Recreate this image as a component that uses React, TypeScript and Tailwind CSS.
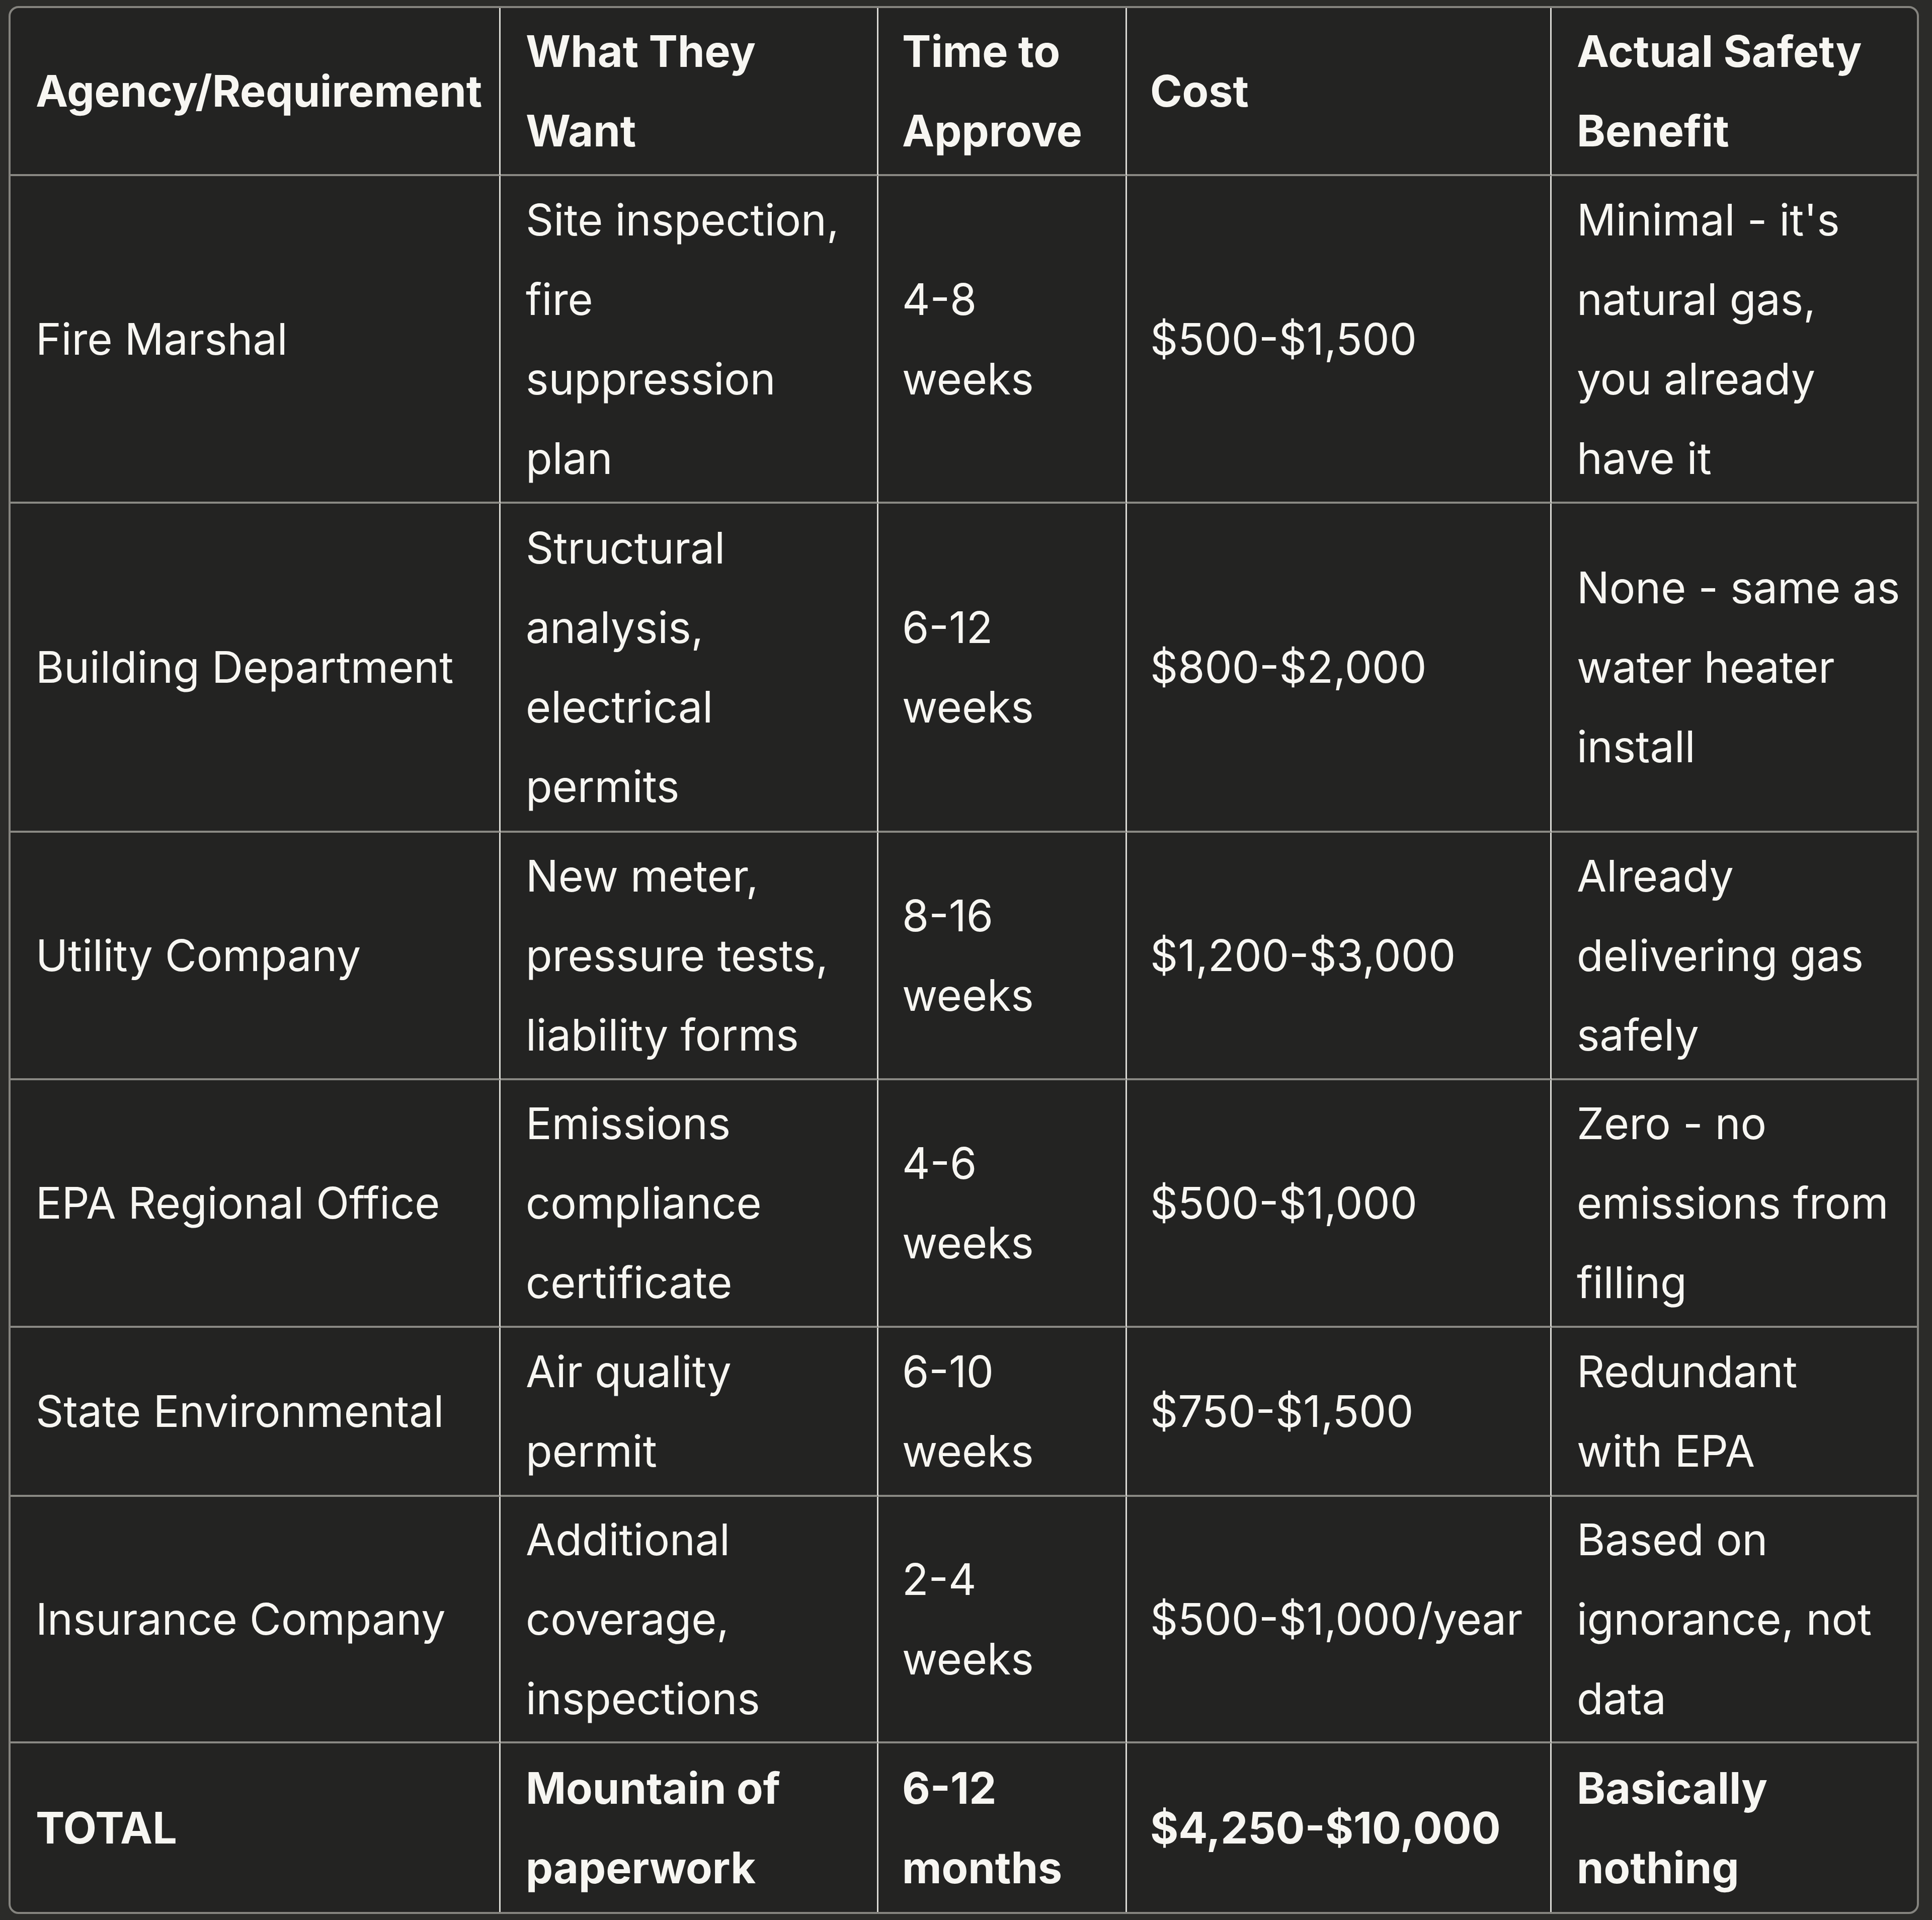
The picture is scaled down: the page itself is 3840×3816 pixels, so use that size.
import React from "react";

type Row = { cells: string[][]; bold?: boolean };

const rows: Row[] = [
  {
    bold: true,
    cells: [
      ["Agency/Requirement"],
      ["What They", "Want"],
      ["Time to", "Approve"],
      ["Cost"],
      ["Actual Safety", "Benefit"],
    ],
  },
  {
    cells: [
      ["Fire Marshal"],
      ["Site inspection,", "fire", "suppression", "plan"],
      ["4-8", "weeks"],
      ["$500-$1,500"],
      ["Minimal - it's", "natural gas,", "you already", "have it"],
    ],
  },
  {
    cells: [
      ["Building Department"],
      ["Structural", "analysis,", "electrical", "permits"],
      ["6-12", "weeks"],
      ["$800-$2,000"],
      ["None - same as", "water heater", "install"],
    ],
  },
  {
    cells: [
      ["Utility Company"],
      ["New meter,", "pressure tests,", "liability forms"],
      ["8-16", "weeks"],
      ["$1,200-$3,000"],
      ["Already", "delivering gas", "safely"],
    ],
  },
  {
    cells: [
      ["EPA Regional Office"],
      ["Emissions", "compliance", "certificate"],
      ["4-6", "weeks"],
      ["$500-$1,000"],
      ["Zero - no", "emissions from", "filling"],
    ],
  },
  {
    cells: [
      ["State Environmental"],
      ["Air quality", "permit"],
      ["6-10", "weeks"],
      ["$750-$1,500"],
      ["Redundant", "with EPA"],
    ],
  },
  {
    cells: [
      ["Insurance Company"],
      ["Additional", "coverage,", "inspections"],
      ["2-4", "weeks"],
      ["$500-$1,000/year"],
      ["Based on", "ignorance, not", "data"],
    ],
  },
  {
    bold: true,
    cells: [
      ["TOTAL"],
      ["Mountain of", "paperwork"],
      ["6-12", "months"],
      ["$4,250-$10,000"],
      ["Basically", "nothing"],
    ],
  },
];

const colPad = ["pl-[50px]", "pl-[50px]", "pl-[47px]", "pl-[46px]", "pl-[50px]"];

export default function App() {
  return (
    <div
      className="min-h-[3816px] w-[3840px] bg-[#2b2b29] pt-[12px] pl-[17px]"
      style={{ fontFamily: "Inter, 'Liberation Sans', sans-serif" }}
    >
      <div className="w-[3797px] overflow-hidden rounded-[20px] border-[4px] border-[#85847f] bg-[#232322] text-[86px] leading-[158px] text-[#f7f6f2]">
        <div className="grid grid-cols-[974px_751px_494px_844px_726px] grid-rows-[334px_651px_654px_492px_492px_336px_490px_335px]">
          {rows.map((row, ri) =>
            row.cells.map((lines, ci) => {
              const lastRow = ri === rows.length - 1;
              const lastCol = ci === row.cells.length - 1;
              return (
                <div
                  key={`${ri}-${ci}`}
                  className={[
                    "flex items-center pr-[8px]",
                    colPad[ci],
                    lastRow ? "" : "border-b-[4px] border-b-[#8a8984]",
                    lastCol ? "" : "border-r-[3px] border-r-[#dcdbd6]",
                    row.bold ? "font-bold" : "font-normal",
                  ].join(" ")}
                >
                  <div className="whitespace-nowrap">
                    {lines.map((l, li) => (
                      <div key={li}>{l}</div>
                    ))}
                  </div>
                </div>
              );
            })
          )}
        </div>
      </div>
    </div>
  );
}
